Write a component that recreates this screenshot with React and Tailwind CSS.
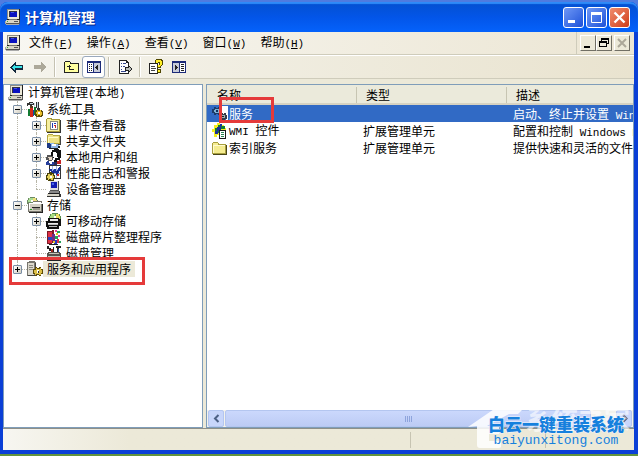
import React, { useState } from 'react';

const Icon = ({ children, className = '' }) => (
  <svg
    viewBox="0 0 16 16"
    shapeRendering="crispEdges"
    aria-hidden="true"
    className={`h-4 w-4 shrink-0 ${className}`}
  >
    {children}
  </svg>
);

const ComputerIcon = () => (
  <Icon>
    <path fill="#ece9d8" d="M2 0h12v10H2z" />
    <path fill="#222" d="M14 0h1v11H2v-1h12z" />
    <path fill="#8c8c84" d="M2 0h12v1H3v9H2z" />
    <path fill="#334" d="M4 2h8v6H4z" />
    <path fill="#0a12c0" d="M5 3h7v5H5z" />
    <path fill="#3c50e8" d="M6 3h3v1H6z" />
    <path fill="#77776f" d="M4 10h8v1H4z" />
    <path fill="#d8d5c6" d="M1 11h13v3H1z" />
    <path fill="#555" d="M14 11h1v4H1v-1h13zM9 12h4v1H9z" />
    <path fill="#3a3" d="M2 12h1v1H2z" />
    <path fill="#aaa" d="M0 12h1v3h13v1H1v-1H0z" />
  </Icon>
);

const ToolsIcon = () => (
  <Icon>
    <path fill="#333" d="M0 2h2V1h4v1h1v2H5v2H3V4H1v1H0zM9 1h3v6h1v2h-3V7H9z" />
    <path fill="#c8d8e0" d="M3 2h3v1H3zM10 1h1v6h-1zM7 2h1v5H7z" />
    <path fill="#5a3a1c" d="M3 5h3v2H3z" />
    <path fill="#d32a1a" d="M3 7h3v9H3z" />
    <path fill="#137a32" d="M1 8h2v7H1zM7 6h2v8H7z" />
    <path fill="#1c3fa8" d="M6 9h1v6H6z" />
    <path fill="#5b4a08" d="M9 9h6v1h1v5h-1v1H9v-1H8v-5h1z" />
    <path fill="#e8be28" d="M10 9h1v1h2V9h1v2h1v3h-1v1h-1v-1h-2v1h-1v-2H9v-2h1z" />
    <path fill="#fff" d="M11 11h2v2h-2z" />
  </Icon>
);

const EventIcon = () => (
  <Icon>
    <path fill="#a89a38" d="M0 2h1V1h5v1h8v13H0z" />
    <path fill="#f6efa0" d="M1 2h4v1h8v11H1z" />
    <path fill="#333" d="M14 3h1v13H1v-1h13z" />
    <path fill="#fff" d="M4 4h8v9H4z" />
    <path fill="#8a8a80" d="M4 4h8v1H5v8H4zM11 5h1v8H5v-1h6z" />
    <path fill="#2038b4" d="M6 6h1v5H6zM8 6h2v1H8z" />
    <path fill="#c72a2a" d="M8 8h2v1H8zM9 9h1v2H9z" />
  </Icon>
);

const SharedIcon = () => (
  <Icon>
    <path fill="#b5a83e" d="M1 2h1V1h5v1h7v9H1z" />
    <path fill="#efe284" d="M2 2h5v1h6v7H2z" />
    <path fill="#fffbc4" d="M2 4h10v1H3v5H2z" />
    <path fill="#444" d="M14 3h1v9H6v-1h8z" />
    <path fill="#1d3a86" d="M1 10h3v1h1v4H1z" />
    <path fill="#8fb4e4" d="M4 10h4v1h4v1h1v3H5v-4H4z" />
    <path fill="#fff" d="M6 11h4v2H6z" />
    <path fill="#222" d="M3 15h9v1H3zM12 13h2v2h-2z" />
  </Icon>
);

const UsersIcon = () => (
  <Icon>
    <path fill="#111" d="M6 1h2V0h5v1h2v8h-1v2h-3v2H8V9H6V7H5V3h1z" />
    <path fill="#fff" d="M7 3h3v1h1v4h1v1H9v2H8V8H7z" />
    <path fill="#555" d="M1 6h4v1h2v4H6v1H2v-1H0V8h1z" />
    <path fill="#e8d8c8" d="M2 8h4v3H3V9H2z" />
    <path fill="#273f9c" d="M0 13h1v-1h5v1h2v3H0z" />
    <path fill="#fff" d="M3 12h3v3H4v-1H3z" />
    <path fill="#c42424" d="M11 12h2v-1h2v4h-4z" />
    <path fill="#2b2b5a" d="M8 13h3v3H8z" />
  </Icon>
);

const PerfIcon = () => (
  <Icon>
    <path fill="#333" d="M3 0h12v14H3z" />
    <path fill="#fff" d="M4 1h10v12H4z" />
    <path fill="#9ab0e0" d="M6 1h1v12H6zM10 1h1v12h-1zM4 4h10v1H4zM4 8h10v1H4z" />
    <path fill="none" stroke="#1a2f98" strokeWidth="2" d="M4 4l3 4 2-3 2 4 3-7" />
    <path fill="#c92b2b" d="M11 9h2v2h-2z" />
    <path fill="#4a420a" d="M1 8h3V7h2v1h2v2h1v4H8v2H2v-1H0v-5h1z" />
    <path fill="#e2cf58" d="M2 9h2v1h2V9h1v2h1v2H7v2H5v-1H3v1H2v-2H1v-2h1z" />
    <path fill="#fff" d="M4 11h2v2H4z" />
  </Icon>
);

const DeviceIcon = () => (
  <Icon>
    <path fill="#555" d="M4 0h9v10H4z" />
    <path fill="#ddd" d="M4 0h8v9H4z" />
    <path fill="#111bb0" d="M5 1h6v6H5z" />
    <path fill="#4765e4" d="M6 2h2v2H6z" />
    <path fill="#888" d="M3 10h10v2H3z" />
    <path fill="#222" d="M2 12h12v1H2z" />
    <path fill="#d6d3c6" d="M1 13h13v2H1z" />
    <path fill="#333" d="M13 10h1v3h1v3H1v-1h12z" />
  </Icon>
);

const StorageIcon = () => (
  <Icon>
    <path fill="#6d8a62" d="M1 1h2V0h5v1h2v2h1v4H0V3h1z" />
    <path fill="#a8dc94" d="M2 1h4v4H1V3h1z" />
    <path fill="#ecdf7c" d="M6 1h3v2h1v3H6z" />
    <path fill="#fff" d="M4 3h2v2H4z" />
    <path fill="#77756c" d="M1 6h5V4h9v3h1v8H1z" />
    <path fill="#d2cfc2" d="M2 7h12v7H2z" />
    <path fill="#fff" d="M6 5h8v1h1v1H3v5H2V6h4z" />
    <path fill="#222" d="M15 7h1v9H2v-1h13zM5 10h8v1H5z" />
    <path fill="#9a988c" d="M6 11h7v2H6z" />
    <path fill="#28a02c" d="M3 12h2v1H3z" />
  </Icon>
);

const RemovableIcon = () => (
  <Icon>
    <path fill="#5a8f50" d="M4 1h2V0h6v1h2v2h1v5H3V3h1z" />
    <path fill="#a8dc84" d="M5 1h4v4H4V3h1z" />
    <path fill="#e8dc62" d="M10 1h3v2h1v3h-4z" />
    <path fill="#fff" d="M8 3h2v2H8z" />
    <path fill="#111" d="M2 5h11v1h2v7h-2v3H1v-2H0V8h2z" />
    <path fill="#eee" d="M4 6h8v2H4zM2 10h10v1H2z" />
    <path fill="#bbb" d="M2 11h10v1H2zM3 13h8v1H3z" />
  </Icon>
);

const DefragIcon = () => (
  <Icon>
    <path fill="#7d1a26" d="M1 2h5V1h2v13H6v1H1z" />
    <path fill="#df2f45" d="M2 3h4v5H2zM2 11h4v3H2z" />
    <path fill="#2a3fbc" d="M2 8h4v3H2zM8 11h3v4H8z" />
    <path fill="#6e2c88" d="M6 5h3v7H6z" />
    <path fill="#24a25a" d="M11 2h3v2h-3zM9 7h3v3H9zM13 12h2v2h-2z" />
    <path fill="#e43c9c" d="M9 1h2v2H9zM12 6h2v2h-2z" />
    <path fill="#d6334c" d="M11 10h2v4h-2z" />
    <path fill="#e9c62f" d="M10 4h2v2h-2zM7 12h2v2H7z" />
    <path fill="#222" d="M3 15h9v1H3z" />
  </Icon>
);

const DiskIcon = () => (
  <Icon>
    <path fill="#222" d="M1 1h2v2h2v3H3V4H1zM7 2h1v5H7zM10 1h5v2h-2v4h-2V3h-1z" />
    <path fill="#a52a20" d="M5 4h2v3H5z" />
    <path fill="#2a55b8" d="M12 4h1v3h-1z" />
    <path fill="#55544e" d="M2 7h12v1h1v7H1V8h1z" />
    <path fill="#c7c5b8" d="M3 8h10v1H3zM2 11h12v3H2z" />
    <path fill="#222" d="M3 12h7v1H3zM1 15h14v1H1z" />
    <path fill="#2daa38" d="M12 12h1v1h-1z" />
  </Icon>
);

const ServerGearIcon = () => (
  <Icon>
    <path fill="#77756d" d="M0 1h2V0h6v1h1v14H0z" />
    <path fill="#dbd8cd" d="M1 2h6v12H1z" />
    <path fill="#8b897f" d="M2 4h4v1H2zM2 6h4v1H2zM2 8h4v1H2z" />
    <path fill="#444" d="M8 2h1v5H8zM1 14h7v1H1z" />
    <path fill="#5e4c08" d="M8 6h2v1h2V6h2v2h2v5h-2v2h-2v-1h-2v1H8v-2H6V8h2z" />
    <path fill="#ddc048" d="M9 7h1v1h3V7h1v2h1v3h-1v2h-2v-1H9v1H8v-2H7V9h2z" />
    <path fill="#fff" d="M10 9h2v3h-2z" />
    <path fill="#333" d="M11 10h1v2h-1z" />
  </Icon>
);

const GearsIcon = () => (
  <Icon>
    <path fill="#1d3b68" d="M2 1h2v1h2V1h2v2h1v4H8v2H6V8H4v1H2V7H0V3h2z" />
    <path fill="#7fb2d8" d="M3 3h4v1h1v2H7v1H3V6H2V4h1z" />
    <path fill="#12305c" d="M4 4h2v2H4z" />
    <path fill="#fff" d="M10 0h6v16h-2V9h-4z" />
    <path fill="#333c48" d="M8 8h2V7h1v1h1V7h2v2h1v4h-2v2h-2v-1H9v-1H7v-3h1z" />
    <path fill="#9fb0b4" d="M9 9h4v3H9z" />
    <path fill="#222" d="M10 10h2v1h-2z" />
  </Icon>
);

const WmiIcon = () => (
  <Icon>
    <path fill="#f2ef22" d="M2 2h3V0h3v2h4v3h2v3H9v4H5v2H2V9H0V6h2z" />
    <path fill="#137b35" d="M3 5h3V2h3v4H7v3h2v3H7v-2H3z" />
    <path fill="#1c2f9a" d="M5 4h3V1h2v4H9v3H6v3H3V8h2z" />
    <path fill="#137b35" d="M9 3h4v3H9z" />
    <path fill="#1a1a1a" d="M7 7h7v9H7z" />
    <path fill="#fff" d="M8 8h5v7H8z" />
    <path fill="#2a8350" d="M9 9h3v1H9zM9 11h3v1H9zM9 13h3v1H9z" />
  </Icon>
);

const FolderIcon = () => (
  <Icon>
    <path fill="#a89f3e" d="M0 3h1V2h5v1h1v1h7v10H0z" />
    <path fill="#f5ec90" d="M1 3h5v2h7v8H1z" />
    <path fill="#fffbd0" d="M1 5h12v1H2v7H1z" />
    <path fill="#4a4618" d="M14 5h1v10H1v-1h13z" />
  </Icon>
);

const UpIcon = () => (
  <Icon>
    <path fill="#222" d="M1 3h1V2h5v1h1v1h8v10H1z" />
    <path fill="#ffffa0" d="M2 4V3h5v2h8v8H2z" />
    <path fill="#222" d="M5 7h1V6h1v1h1v1H7v2h4v1H6V8H4V7z" />
  </Icon>
);

const TreePaneIcon = () => (
  <Icon>
    <path fill="#1c2a78" d="M1 2h14v12H1z" />
    <path fill="#fff" d="M2 4h5v9H2z" />
    <path fill="#c6cad8" d="M8 4h6v9H8z" />
    <path
      fill="#222"
      d="M3 5h1v1H3zM5 5h1v1H5zM3 7h1v1H3zM5 7h1v1H5zM3 9h1v1H3zM5 9h1v1H5zM3 11h1v1H3zM5 11h1v1H5zM12 6v5h-1v-1h-1V9H9V8h1V7h1V6z"
    />
  </Icon>
);

const ActionPaneIcon = () => (
  <Icon>
    <path fill="#1c2a78" d="M1 2h14v12H1z" />
    <path fill="#c6cad8" d="M2 4h6v9H2z" />
    <path fill="#fff" d="M9 4h5v9H9z" />
    <path
      fill="#222"
      d="M4 6h1v1h1v1h1v1H6v1H5v1H4zM10 5h3v1h-3zM10 7h3v1h-3zM10 9h3v1h-3zM10 11h3v1h-3z"
    />
  </Icon>
);

const ExportIcon = () => (
  <Icon>
    <path fill="#222" d="M2 1h8v1h1v1h1v12H2z" />
    <path fill="#fff" d="M3 2h6v2h2v10H3z" />
    <path
      fill="#33458c"
      d="M4 4h1v1H4zM6 4h3v1H6zM4 7h1v1H4zM6 7h2v1H6zM4 10h1v1H4zM4 12h5v1H4z"
    />
    <path fill="#222" d="M8 8h3V6h1v1h1v1h1v1h1v2h-1v1h-1v1h-1v1h-1v-2H8z" />
    <path fill="#b9bdb9" d="M9 9h3V8h1v1h1v2h-1v1h-1v-1H9z" />
  </Icon>
);

const HelpIcon = () => (
  <Icon>
    <path fill="#222" d="M1 4h9v11H1z" />
    <path fill="#fff" d="M2 5h7v9H2z" />
    <path fill="#444" d="M3 7h4v1H3zM3 9h5v1H3zM3 11h4v1H3z" />
    <path fill="#4e4600" d="M7 1h1V0h6v1h1v5h-1v1h-1v2H9V6h2V4H7z" />
    <path fill="#ffef24" d="M8 1h5v1h1v4h-1v1h-1v1h-2V6h2V3h-2v1H8z" />
    <path fill="#4e4600" d="M9 10h4v4H9z" />
    <path fill="#ffef24" d="M10 11h2v2h-2z" />
  </Icon>
);

const BackIcon = () => (
  <Icon>
    <path fill="#14283c" d="M1 8l5-5h1v3h7v5H7v3H6z" />
    <path fill="#38e4e8" d="M3 8l3-3v2h7v2H6v3z" />
  </Icon>
);

const ForwardIcon = () => (
  <Icon>
    <path fill="#aca899" d="M14 8L9 3v3H2v4h7v4z" />
  </Icon>
);

const menus = [
  { label: '文件', hotkey: 'F' },
  { label: '操作', hotkey: 'A' },
  { label: '查看', hotkey: 'V' },
  { label: '窗口', hotkey: 'W' },
  { label: '帮助', hotkey: 'H' },
];

// last: the guide line of the row stops at its middle
const tree = [
  { id: 'tools', label: '系统工具', icon: ToolsIcon, level: 1, open: true },
  { id: 'event', label: '事件查看器', icon: EventIcon, level: 2, open: false },
  { id: 'shared', label: '共享文件夹', icon: SharedIcon, level: 2, open: false },
  { id: 'users', label: '本地用户和组', icon: UsersIcon, level: 2, open: false },
  { id: 'perf', label: '性能日志和警报', icon: PerfIcon, level: 2, open: false },
  { id: 'device', label: '设备管理器', icon: DeviceIcon, level: 2, last: true },
  { id: 'storage', label: '存储', icon: StorageIcon, level: 1, open: true },
  { id: 'removable', label: '可移动存储', icon: RemovableIcon, level: 2, open: false },
  { id: 'defrag', label: '磁盘碎片整理程序', icon: DefragIcon, level: 2 },
  { id: 'disk', label: '磁盘管理', icon: DiskIcon, level: 2, last: true },
  {
    id: 'services',
    label: '服务和应用程序',
    icon: ServerGearIcon,
    level: 1,
    open: false,
    last: true,
    marked: true,
  },
];

const rows = [
  { name: '服务', type: '', icon: GearsIcon, text: '启动、终止并设置', latin: 'Windows' },
  {
    prefix: 'WMI',
    name: '控件',
    type: '扩展管理单元',
    icon: WmiIcon,
    text: '配置和控制',
    latin: 'Windows Management',
  },
  {
    name: '索引服务',
    type: '扩展管理单元',
    icon: FolderIcon,
    text: '提供快速和灵活的文件',
    latin: '',
  },
];

const Latin = ({ children }) => (
  <span className="font-['Liberation_Mono',monospace] text-[11px]">{children}</span>
);

const CaptionButton = ({ label, className, children }) => (
  <button
    type="button"
    aria-label={label}
    className={`flex h-[21px] w-[21px] items-center justify-center rounded-[3px] border border-white bg-linear-to-br ${className}`}
  >
    <svg viewBox="0 0 19 19" className="h-[19px] w-[19px]" fill="none" stroke="#fff">
      {children}
    </svg>
  </button>
);

const MdiButton = ({ label, className = '', children }) => (
  <button
    type="button"
    aria-label={label}
    className={`flex h-4 w-4 items-center justify-center border border-t-white border-r-[#716f64] border-b-[#716f64] border-l-white bg-[#ece9d8] ${className}`}
  >
    <svg viewBox="0 0 14 14" className="h-3.5 w-3.5" shapeRendering="crispEdges">
      {children}
    </svg>
  </button>
);

const ToolButton = ({ label, active, children }) => (
  <button
    type="button"
    aria-label={label}
    className={`flex h-[22px] w-[23px] items-center justify-center rounded-[3px] ${
      active ? 'border border-[#9aa9bd] bg-white' : ''
    }`}
  >
    {children}
  </button>
);

const Separator = () => (
  <div className="mx-[3px] h-5 w-0.5 border-r border-l border-r-white border-l-[#c5c2b2]" />
);

const Expander = ({ open, label, onClick }) => (
  <button
    type="button"
    aria-label={label}
    onClick={onClick}
    className="flex h-[9px] w-[9px] shrink-0 rounded-[1px] border border-[#7b8ea5] bg-linear-to-br from-white to-[#d2cec0]"
  >
    <svg viewBox="0 0 7 7" className="h-[7px] w-[7px]" shapeRendering="crispEdges">
      <path d={open ? 'M1 3h5v1H1z' : 'M1 3h5v1H1zM3 1h1v5H3z'} />
    </svg>
  </button>
);

const Guide = ({ half }) => (
  <div className="flex w-[19px] shrink-0 justify-center self-stretch">
    <div className={`border-l border-dotted border-[#b8b6a8] ${half ? 'h-2' : 'h-full'}`} />
  </div>
);

const TreeRow = ({ item, onToggle }) => {
  const Glyph = item.icon;
  const hasChildren = item.open !== undefined;
  return (
    <li className="relative flex h-4 items-center pl-1">
      {item.level === 2 && <Guide />}
      <div className="relative flex w-[19px] shrink-0 items-center justify-center self-stretch">
        <Guide half={item.last} />
        <div className="absolute top-2 left-[9px] w-[10px] border-t border-dotted border-[#b8b6a8]" />
        {hasChildren && (
          <div className="absolute inset-0 flex items-center justify-center">
            <Expander
              open={item.open}
              label={item.label}
              onClick={() => onToggle(item.id)}
            />
          </div>
        )}
      </div>
      <Glyph />
      <span className={`px-1 ${item.marked ? 'bg-[#ece9d8]' : ''}`}>{item.label}</span>
      {item.marked && (
        <div className="pointer-events-none absolute -top-1 left-[5px] h-7 w-[136px] border-3 border-[#e53a3a]" />
      )}
    </li>
  );
};

const Watermark = () => (
  <div className="pointer-events-none absolute right-2 bottom-1.5 h-12 w-[162px]">
    <svg viewBox="0 0 162 48" className="absolute inset-0 h-full w-full" aria-hidden="true">
      <path
        fill="#fff"
        fillOpacity="0.85"
        fillRule="evenodd"
        d="M0 25L32 3q5-4 10-1l12 6-4 4h-9l-22 12h12v8H21v7h12v6q0 1-3 1H12q-3 0-3-3V24z"
      />
    </svg>
    <div className="absolute top-0.5 right-0 text-[26px] leading-7 font-bold text-white/60">
      系统之家
    </div>
    <div className="absolute top-[13px] right-1.5 flex flex-col items-center text-[#1680dd]">
      <span className="text-[17px] leading-[18px] font-black whitespace-nowrap [paint-order:stroke] [-webkit-text-stroke:1px_#eef5fd]">
        白云一键重装系统
      </span>
      <span className="font-['Liberation_Mono',monospace] text-[13px] leading-4">
        baiyunxitong.com
      </span>
    </div>
  </div>
);

const ComputerManagement = () => {
  const [nodes, setNodes] = useState(tree);
  const [selected, setSelected] = useState(0);

  const handleToggle = (id) => {
    setNodes((prev) =>
      prev.map((node) => (node.id === id ? { ...node, open: !node.open } : node)),
    );
  };

  return (
    <div className="relative flex min-h-screen flex-col overflow-hidden bg-linear-to-b from-[#4f7be0] from-50% to-[#62933d] to-50% pt-[2px] pb-[2px] font-['Noto_Sans_CJK_SC',sans-serif] text-xs leading-4 text-black">
      <div className="flex flex-1 flex-col rounded-t-lg bg-[#0a3fd6] pr-1 pb-1 pl-[3px]">
        <header className="-mr-1 -ml-[3px] flex h-[30px] items-center gap-1 rounded-t-lg bg-linear-to-b from-[#0450cf] via-[#0355e8] via-50% to-[#0562fb] pr-2 pl-[5px] shadow-[inset_0_2px_1px_#2f8bf8]">
          <ComputerIcon />
          <h1 className="flex-1 text-sm font-bold text-white [text-shadow:1px_1px_#0a2a8a]">
            计算机管理
          </h1>
          <div className="flex gap-[2px]">
            <CaptionButton label="最小化" className="from-[#6f97f5] to-[#1d4fd8]">
              <path strokeWidth="3" d="M4 13.5h7" />
            </CaptionButton>
            <CaptionButton label="最大化" className="from-[#6f97f5] to-[#1d4fd8]">
              <path d="M4.500 5.500h10v9h-10z" />
              <path strokeWidth="3" d="M4 5.500h11" />
            </CaptionButton>
            <CaptionButton label="关闭" className="from-[#f08c6c] to-[#cf3a12]">
              <path strokeWidth="2.400" d="M4.500 4.500l10 10M14.500 4.500l-10 10" />
            </CaptionButton>
          </div>
        </header>

        <nav className="flex h-[23px] items-center border-b border-[#cfccbb] bg-linear-to-r from-[#f8f7f2] to-[#ece6d4] pr-1 pl-[2px]">
          <ComputerIcon />
          <div className="ml-2 flex flex-1 gap-3.5">
            {menus.map((menu) => (
              <button key={menu.hotkey} type="button" className="whitespace-nowrap">
                {menu.label}
                <Latin>
                  (<u>{menu.hotkey}</u>)
                </Latin>
              </button>
            ))}
          </div>
          <div className="flex h-full items-center border-l border-[#cfccbb] pl-[3px]">
            <MdiButton label="最小化窗口">
              <path d="M3 10h6v2H3z" />
            </MdiButton>
            <MdiButton label="还原窗口">
              <path fillRule="evenodd" d="M4 2h8v6h-2v3H2V5h2zM5 4v1h5v2h1V4zM3 7v3h6V7z" />
            </MdiButton>
            <MdiButton label="关闭窗口" className="ml-[2px]">
              <path
                fill="none"
                stroke="#aca899"
                strokeWidth="2"
                shapeRendering="auto"
                d="M3 3l8 8M11 3l-8 8"
              />
            </MdiButton>
          </div>
        </nav>

        <div className="flex h-6 items-center border-t border-b border-t-white border-b-[#cfccbb] bg-linear-to-r from-[#f5f4ed] to-[#e9e3cf] pl-[2px]">
          <ToolButton label="后退">
            <BackIcon />
          </ToolButton>
          <ToolButton label="前进">
            <ForwardIcon />
          </ToolButton>
          <Separator />
          <ToolButton label="向上">
            <UpIcon />
          </ToolButton>
          <ToolButton label="显示控制台树" active>
            <TreePaneIcon />
          </ToolButton>
          <Separator />
          <ToolButton label="导出列表">
            <ExportIcon />
          </ToolButton>
          <Separator />
          <ToolButton label="帮助">
            <HelpIcon />
          </ToolButton>
          <ToolButton label="显示操作窗格">
            <ActionPaneIcon />
          </ToolButton>
        </div>

        <main className="flex flex-1 gap-[3px] bg-[#ece9d8] pt-[5px]">
          <aside className="w-[200px] shrink-0 border border-[#7f9db9] bg-white">
            <ul>
              <li className="flex h-4 items-center pl-1">
                <ComputerIcon />
                <span className="pl-1">
                  计算机管理<Latin>(</Latin>本地<Latin>)</Latin>
                </span>
              </li>
              {nodes.map((item) => (
                <TreeRow key={item.id} item={item} onToggle={handleToggle} />
              ))}
            </ul>
          </aside>

          <section className="flex min-w-0 flex-1 flex-col border border-[#7f9db9] bg-white">
            <div className="flex-1 overflow-hidden">
              <table className="w-full table-fixed border-collapse text-left whitespace-nowrap">
                <colgroup>
                  <col className="w-[149px]" />
                  <col className="w-[150px]" />
                  <col />
                </colgroup>
                <thead>
                  <tr className="h-5 bg-[#ebeadb] shadow-[inset_0_-2px_0_#d6d2c2]">
                    <th className="p-0 pl-[10px] font-normal">名称</th>
                    <th className="p-0 font-normal">
                      <div className="border-l border-[#c7c5b2] pl-[9px]">类型</div>
                    </th>
                    <th className="p-0 font-normal">
                      <div className="border-l border-[#c7c5b2] pl-[9px]">描述</div>
                    </th>
                  </tr>
                </thead>
                <tbody>
                  {rows.map((row, index) => {
                    const Glyph = row.icon;
                    return (
                      <tr
                        key={row.name}
                        onClick={() => setSelected(index)}
                        className={selected === index ? 'bg-[#316ac5] text-white' : ''}
                      >
                        <td className="relative p-0 pl-[5px]">
                          <div className="flex h-[17px] items-center gap-px">
                            <Glyph />
                            <span>
                              {row.prefix && <Latin>{row.prefix} </Latin>}
                              {row.name}
                            </span>
                          </div>
                          {index === 0 && (
                            <div className="pointer-events-none absolute -top-2 left-3 h-[26px] w-[55px] border-3 border-[#e53a3a]" />
                          )}
                        </td>
                        <td className="p-0 pl-[7px]">
                          <div className="h-[17px] leading-[17px]">{row.type}</div>
                        </td>
                        <td className="p-0 pl-[7px]">
                          <div className="h-[17px] overflow-hidden leading-[17px]">
                            {row.text}
                            {row.latin && <Latin> {row.latin}</Latin>}
                          </div>
                        </td>
                      </tr>
                    );
                  })}
                </tbody>
              </table>
            </div>
            <div className="flex h-[17px] gap-px bg-[#f3f2ec] px-px">
              <button
                type="button"
                aria-label="向左滚动"
                className="flex w-4 items-center justify-center rounded-[2px] border border-[#b4c6f0] bg-[#c8d6fb]"
              >
                <svg viewBox="0 0 9 9" className="h-[9px] w-[9px]">
                  <path fill="none" stroke="#4d6185" strokeWidth="2" d="M6.500 1L3 4.500 6.500 8" />
                </svg>
              </button>
              <div className="flex flex-1 pr-6">
                <div className="flex flex-1 items-center justify-center gap-px rounded-[2px] border border-[#b4c6f0] bg-linear-to-b from-[#cbd8fc] to-[#bccbf5]">
                  {[0, 1, 2, 3].map((n) => (
                    <span key={n} className="h-1.5 w-px bg-[#8ea4dc]" />
                  ))}
                </div>
              </div>
              <button
                type="button"
                aria-label="向右滚动"
                className="flex w-4 items-center justify-center rounded-[2px] border border-[#b4c6f0] bg-[#c8d6fb]"
              >
                <svg viewBox="0 0 9 9" className="h-[9px] w-[9px]">
                  <path fill="none" stroke="#4d6185" strokeWidth="2" d="M3 1l3.500 3.500L3 8" />
                </svg>
              </button>
            </div>
          </section>
        </main>

        <footer className="flex h-[22px] items-center justify-end border-t border-[#8e8f88] bg-linear-to-r from-[#f7f6f1] to-[#ece9d8] to-20% pr-[88px]">
          <div className="h-4 w-[136px] border-r border-l border-[#c7c4b2]" />
        </footer>
      </div>
      <Watermark />
    </div>
  );
};

const App = () => <ComputerManagement />;

export default App;
